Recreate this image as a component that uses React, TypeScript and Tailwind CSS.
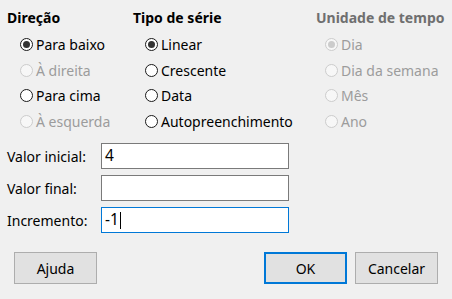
import React from "react";

type Opt = { label: string; checked?: boolean; disabled?: boolean };

const direcao: Opt[] = [
  { label: "Para baixo", checked: true },
  { label: "À direita", disabled: true },
  { label: "Para cima" },
  { label: "À esquerda", disabled: true },
];

const tipo: Opt[] = [
  { label: "Linear", checked: true },
  { label: "Crescente" },
  { label: "Data" },
  { label: "Autopreenchimento" },
];

const unidade: Opt[] = [
  { label: "Dia", checked: true, disabled: true },
  { label: "Dia da semana", disabled: true },
  { label: "Mês", disabled: true },
  { label: "Ano", disabled: true },
];

function Radio({ label, checked, disabled }: Opt) {
  return (
    <div className="flex h-[25.5px] items-center">
      <span
        className={`flex h-[13px] w-[13px] shrink-0 items-center justify-center rounded-full border ${
          disabled ? "border-[#cccccc] bg-[#f7f7f7]" : "border-[#1a1a1a] bg-white"
        }`}
      >
        {checked && (
          <span
            className={`h-[7px] w-[7px] rounded-full ${
              disabled ? "bg-[#cccccc]" : "bg-[#333333]"
            }`}
          />
        )}
      </span>
      <span className={`ml-[3px] ${disabled ? "text-[#9c9c9c]" : "text-black"}`}>
        {label}
      </span>
    </div>
  );
}

function Group({
  title,
  options,
  disabled,
  className,
  indent,
}: {
  title: string;
  options: Opt[];
  disabled?: boolean;
  className: string;
  indent: string;
}) {
  return (
    <div className={className}>
      <div
        className={`h-[20px] whitespace-nowrap text-[14px] font-bold leading-[20px] ${
          disabled ? "text-[#6f6f6f]" : "text-black"
        }`}
      >
        {title}
      </div>
      <div className={`mt-[4px] ${indent}`}>
        {options.map((o) => (
          <Radio key={o.label} {...o} />
        ))}
      </div>
    </div>
  );
}

function Field({ label, value, focused }: { label: string; value: string; focused?: boolean }) {
  return (
    <div className="flex h-[26px] items-center">
      <span className="w-[94px] text-black">{label}</span>
      <div
        className={`flex h-[26px] w-[188px] items-center border bg-white pl-[3px] text-[15.5px] text-black ${
          focused ? "border-[#0078d7]" : "border-[#7a7a7a]"
        }`}
      >
        {value}
        {focused && <span className="ml-[1px] h-[17px] border-l border-black" />}
      </div>
    </div>
  );
}

function Button({ label, primary }: { label: string; primary?: boolean }) {
  return (
    <button
      className={`h-[32px] w-[83px] bg-[#e1e1e1] text-black ${
        primary ? "border-2 border-[#0078d7]" : "border border-[#adadad]"
      }`}
    >
      {label}
    </button>
  );
}

export default function App() {
  return (
    <div
      className="h-[299px] w-[452px] bg-[#f0f0f0] text-[14px]"
      style={{ fontFamily: '"Noto Sans", "Open Sans", sans-serif' }}
    >
      <div className="flex pl-[7px] pt-[8px]">
        <Group title="Direção" options={direcao} className="w-[126px]" indent="pl-[13px]" />
        <Group title="Tipo de série" options={tipo} className="w-[183px]" indent="pl-[12px]" />
        <Group title="Unidade de tempo" options={unidade} disabled className="w-[136px]" indent="pl-[9px]" />
      </div>

      <div className="mt-[9px] flex flex-col gap-[6px] pl-[7px]">
        <Field label="Valor inicial:" value="4" />
        <Field label="Valor final:" value="" />
        <Field label="Incremento:" value="-1" focused />
      </div>

      <div className="mt-[19px] flex px-[14px]">
        <Button label="Ajuda" />
        <div className="ml-auto flex gap-[8px]">
          <Button label="OK" primary />
          <Button label="Cancelar" />
        </div>
      </div>
    </div>
  );
}
